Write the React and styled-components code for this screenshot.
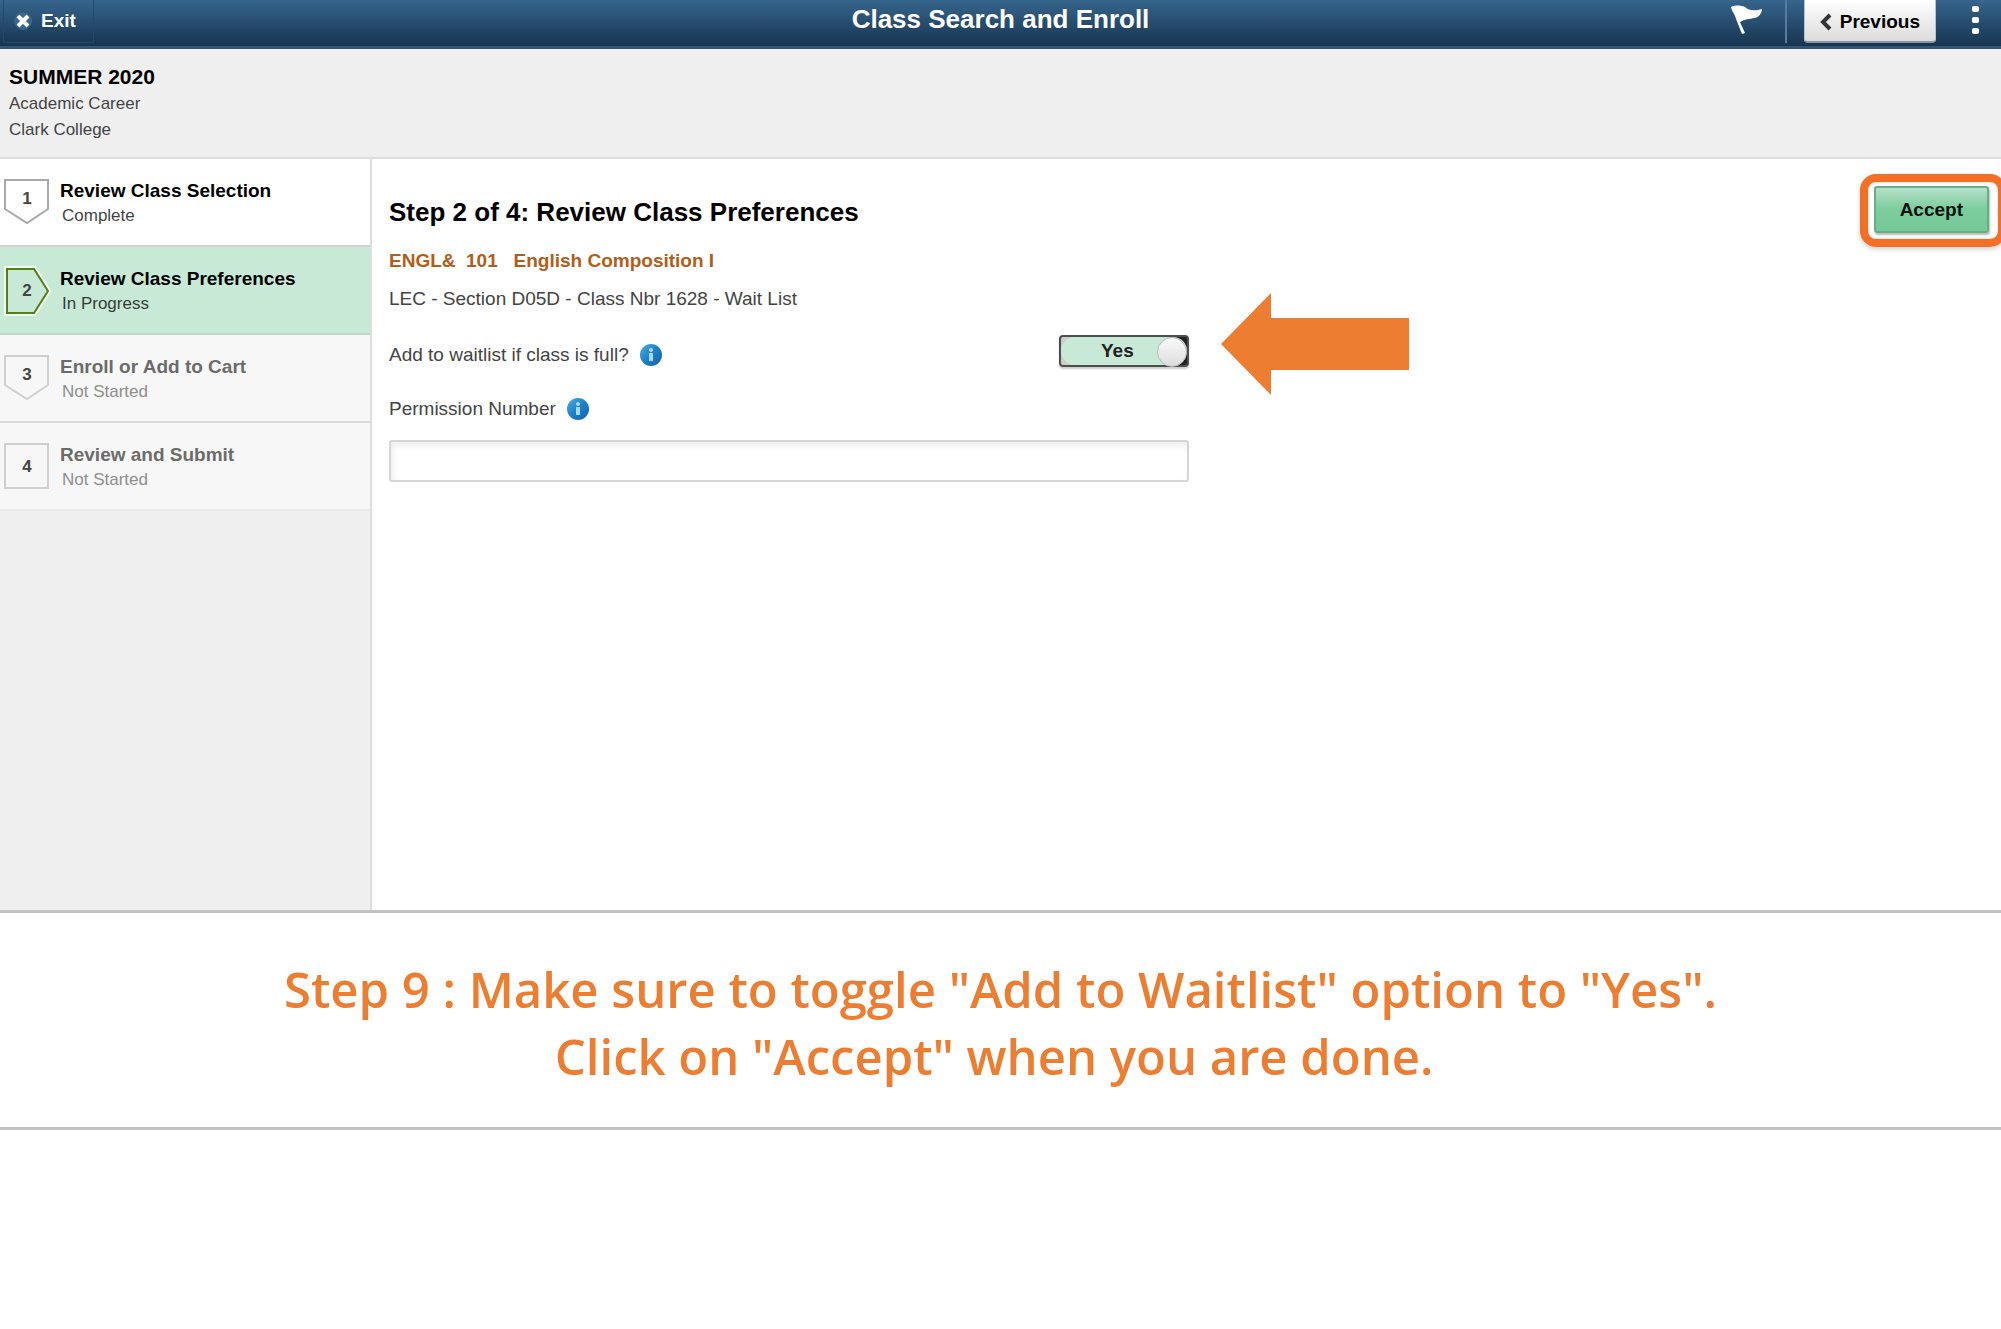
import React, { useState } from "react";
import styled, { createGlobalStyle, css } from "styled-components";

const steps = [
  { id: 1, title: "Review Class Selection", status: "Complete", state: "done" },
  {
    id: 2,
    title: "Review Class Preferences",
    status: "In Progress",
    state: "active",
  },
  { id: 3, title: "Enroll or Add to Cart", status: "Not Started", state: "todo" },
  { id: 4, title: "Review and Submit", status: "Not Started", state: "todo" },
];

const BadgeShape = ({ id, state }) => {
  if (state === "active") {
    return (
      <svg width="48" height="48" viewBox="0 0 48 48" aria-hidden="true">
        <path d="M3 2H30L44 24L30 46H3Z" fill="none" stroke="#f4faf0" strokeWidth="6" />
        <path d="M3 2H30L44 24L30 46H3Z" fill="#c8e9d6" stroke="#4f8118" strokeWidth="2" />
      </svg>
    );
  }

  const stroke = state === "done" ? "#a9a9a9" : "#cfcfcf";

  return (
    <svg width="46" height="46" viewBox="0 0 46 46" aria-hidden="true">
      <path
        d={id === steps.length ? "M1 1H44V45H1Z" : "M1 1H44V30L23 44L1 30Z"}
        fill="none"
        stroke={stroke}
        strokeWidth="2"
      />
    </svg>
  );
};

const InfoIcon = () => (
  <svg width="22" height="22" viewBox="0 0 22 22" aria-hidden="true">
    <defs>
      <linearGradient id="info" x1="0" y1="0" x2="1" y2="1">
        <stop offset="0" stopColor="#4db0dd" />
        <stop offset="0.5" stopColor="#1c80c8" />
        <stop offset="1" stopColor="#1a5fae" />
      </linearGradient>
    </defs>
    <circle cx="11" cy="11" r="11" fill="url(#info)" />
    <circle cx="11" cy="6" r="2" fill="#a9d8f2" />
    <rect x="9" y="9" width="4" height="8" fill="#a9d8f2" />
  </svg>
);

const App = () => {
  const [waitlist, setWaitlist] = useState(true);
  const [permission, setPermission] = useState("");

  return (
    <Page>
      <GlobalStyle />
      <TopBar>
        <ExitButton type="button">
          <svg width="18" height="18" viewBox="0 0 18 18" aria-hidden="true">
            <circle cx="9" cy="9" r="9" fill="#36678f" />
            <path d="M4 4L14 14M14 4L4 14" stroke="#fff" strokeWidth="4" />
          </svg>
          Exit
        </ExitButton>
        <BarTitle>Class Search and Enroll</BarTitle>
        <BarActions>
          <IconButton type="button" aria-label="Notifications">
            <svg width="32" height="30" viewBox="0 0 32 30" aria-hidden="true">
              <path
                d="M0 2C3 0 10 0 14 2C18 6 24 6 31 4C31 8 28 12 24 13C18 14 14 14 9 17L14 28L11 29L5 14C4 9 1 7 0 2Z"
                fill="#fff"
              />
            </svg>
          </IconButton>
          <Divider />
          <PreviousButton type="button">
            <svg width="12" height="18" viewBox="0 0 12 18" aria-hidden="true">
              <path d="M10 2L3 9L10 16" fill="none" stroke="#333" strokeWidth="4" />
            </svg>
            Previous
          </PreviousButton>
          <IconButton type="button" aria-label="Actions">
            <svg width="8" height="30" viewBox="0 0 8 30" aria-hidden="true">
              <rect x="1" y="1" width="7" height="6" rx="2" fill="#fff" />
              <rect x="1" y="12" width="7" height="6" rx="2" fill="#fff" />
              <rect x="1" y="23" width="7" height="6" rx="2" fill="#fff" />
            </svg>
          </IconButton>
        </BarActions>
      </TopBar>

      <TermHeader>
        <h2>SUMMER 2020</h2>
        <p>Academic Career</p>
        <p>Clark College</p>
      </TermHeader>

      <Body>
        <Sidebar>
          {steps.map((step) => (
            <Step key={step.id} $state={step.state}>
              <Badge $down={step.state !== "active" && step.id !== steps.length}>
                <BadgeShape id={step.id} state={step.state} />
                <span>{step.id}</span>
              </Badge>
              <div>
                <StepTitle>{step.title}</StepTitle>
                <StepStatus>{step.status}</StepStatus>
              </div>
            </Step>
          ))}
        </Sidebar>

        <Main>
          <Form>
            <h1>Step 2 of 4: Review Class Preferences</h1>
            <Course>{"ENGL&  101   English Composition I"}</Course>
            <Section>LEC - Section D05D - Class Nbr 1628 - Wait List</Section>

            <ToggleRow>
              <FieldLabel htmlFor="waitlist">
                Add to waitlist if class is full?
                <InfoIcon />
              </FieldLabel>
              <Toggle $on={waitlist}>
                <input
                  id="waitlist"
                  type="checkbox"
                  checked={waitlist}
                  onChange={(e) => setWaitlist(e.target.checked)}
                />
                <span>{waitlist ? "Yes" : "No"}</span>
              </Toggle>
              <Arrow width="188" height="102" viewBox="0 0 188 102" aria-hidden="true">
                <path d="M0 51L50 0V25H188V77H50V102Z" fill="#ed7d31" />
              </Arrow>
            </ToggleRow>

            <FieldLabel htmlFor="permission">
              Permission Number
              <InfoIcon />
            </FieldLabel>
            <TextInput
              id="permission"
              type="text"
              value={permission}
              onChange={(e) => setPermission(e.target.value)}
            />
          </Form>

          <AcceptWrap>
            <AcceptButton type="button">Accept</AcceptButton>
          </AcceptWrap>
        </Main>
      </Body>

      <Caption>
        Step 9 : Make sure to toggle "Add to Waitlist" option to "Yes".
        <br />
        Click on "Accept" when you are done.&nbsp;
      </Caption>
    </Page>
  );
};

const GlobalStyle = createGlobalStyle`
  * {
    box-sizing: border-box;
    margin: 0;
  }

  body {
    background: #fff;
    color: #000;
    font-family: "Liberation Sans", Arial, sans-serif;
    font-size: 19px;
    line-height: 24px;
  }

  button, input {
    font: inherit;
  }
`;

const Page = styled.div`
  overflow-x: hidden;
`;

const TopBar = styled.header`
  display: grid;
  grid-template-columns: 1fr auto 1fr;
  align-items: start;
  height: 49px;
  background: linear-gradient(#36658c, #173450);
  border-bottom: 3px solid #335575;
`;

const ExitButton = styled.button`
  justify-self: start;
  display: flex;
  align-items: center;
  gap: 9px;
  height: 43px;
  margin-left: 3px;
  padding: 0 17px 0 10px;
  color: #fff;
  font-weight: bold;
  background: transparent;
  border: 1px solid #234a6a;
  border-top: none;
`;

const BarTitle = styled.div`
  padding-top: 4px;
  color: #fff;
  font-size: 26px;
  font-weight: bold;
  line-height: 30px;
`;

const BarActions = styled.div`
  display: flex;
  justify-content: flex-end;
`;

const IconButton = styled.button`
  display: flex;
  justify-content: center;
  height: 43px;
  padding: 5px 22px;
  background: transparent;
  border: none;
`;

const Divider = styled.span`
  width: 2px;
  height: 43px;
  margin-right: 17px;
  background: #587d9c;
`;

const PreviousButton = styled.button`
  display: flex;
  align-items: center;
  gap: 8px;
  height: 43px;
  margin-right: 13px;
  padding: 3px 15px 0;
  color: #000;
  font-weight: bold;
  background: linear-gradient(#fff, #dcdcdc);
  border: 1px solid #b9c3cc;
  border-top: none;
  border-bottom: 2px solid #8797a5;
  border-radius: 0 0 4px 4px;
`;

const TermHeader = styled.section`
  padding: 15px 9px 14px;
  background: #efefef;
  border-bottom: 2px solid #dedede;
  line-height: 26px;

  h2 {
    margin-bottom: 1px;
    font-size: 21px;
  }

  p {
    color: #444;
    font-size: 17px;
  }
`;

const Body = styled.div`
  display: flex;
  min-height: 751px;
`;

const Sidebar = styled.nav`
  flex: 0 0 372px;
  background: #efefef;
  border-right: 2px solid #dedede;
`;

const Step = styled.div`
  display: flex;
  align-items: flex-start;
  height: 88px;
  padding: 20px 0 0 4px;
  color: #6b6b6b;
  background: #f7f7f7;
  border-bottom: 2px solid #dadada;

  ${({ $state }) =>
    $state !== "todo" &&
    css`
      color: #000;
      background: ${$state === "active" ? "#c8e9d6" : "#fff"};
      border-color: ${$state === "active" ? "#bfd6c9" : "#cfd4d1"};
    `}

  &:last-child {
    border-color: #ebebeb;
  }
`;

const Badge = styled.div`
  display: grid;
  flex: 0 0 56px;
  font-size: 17px;
  font-weight: bold;

  svg,
  span {
    grid-area: 1 / 1;
  }

  svg {
    overflow: visible;
  }

  span {
    width: 46px;
    padding-top: ${({ $down }) => ($down ? "8px" : "12px")};
    color: #444;
    text-align: center;
  }
`;

const StepTitle = styled.div`
  font-weight: bold;
`;

const StepStatus = styled.div`
  margin-top: 1px;
  padding-left: 2px;
  font-size: 17px;
  opacity: 0.75;
`;

const Main = styled.main`
  flex: 1;
  display: flex;
  justify-content: space-between;
  align-items: flex-start;
  padding: 0 12px 0 17px;
  background: #fff;
`;

const Form = styled.div`
  flex: 0 1 800px;
  padding-top: 38px;

  h1 {
    font-size: 26px;
    line-height: 30px;
  }
`;

const Course = styled.p`
  margin-top: 22px;
  color: #b35d1b;
  font-weight: bold;
  white-space: pre-wrap;
`;

const Section = styled.p`
  margin-top: 14px;
  color: #444;
`;

const ToggleRow = styled.div`
  position: relative;
  display: flex;
  justify-content: space-between;
  align-items: flex-end;
  margin: 24px 0 30px;
`;

const FieldLabel = styled.label`
  display: flex;
  align-items: center;
  gap: 11px;
  color: #444;
`;

const Toggle = styled.div`
  position: relative;
  width: 130px;
  height: 32px;
  background: linear-gradient(to right, #ccc 50%, #222 90%);
  border: 2px solid #4a4f4c;
  border-radius: 4px;
  box-shadow: 0 2px 2px #ccc;

  input {
    appearance: none;
    display: block;
    width: 100%;
    height: 100%;
    background: ${({ $on }) => ($on ? "#c8e9d6" : "#eee")};
    border-radius: 14px;
  }

  span {
    position: absolute;
    top: 2px;
    left: 40px;
    color: #222;
    font-weight: bold;
    pointer-events: none;
  }

  &::after {
    content: "";
    position: absolute;
    top: 0;
    ${({ $on }) => ($on ? "right: 0;" : "left: 0;")}
    width: 28px;
    height: 28px;
    background: linear-gradient(#fafafa, #dcdcdc);
    border: 1px solid #b5bab7;
    border-radius: 50%;
    pointer-events: none;
  }
`;

/* callout arrow, sits beside the toggle */
const Arrow = styled.svg`
  position: absolute;
  top: -42px;
  left: calc(100% + 32px);
`;

const TextInput = styled.input`
  display: block;
  width: 100%;
  height: 42px;
  margin-top: 19px;
  padding: 0 10px;
  border: 2px solid #d6d6d6;
  border-radius: 3px;
  box-shadow: inset 2px 4px 6px #eee;
`;

const AcceptWrap = styled.div`
  position: relative;
  margin-top: 27px;

  &::after {
    content: "";
    position: absolute;
    top: -12px;
    right: -17px;
    bottom: -14px;
    left: -14px;
    border: 8px solid #f36f26;
    border-radius: 16px;
    box-shadow: 0 2px 5px #ccc, inset 0 0 3px #ccc;
    pointer-events: none;
  }
`;

const AcceptButton = styled.button`
  display: block;
  height: 47px;
  padding: 0 24px;
  color: #111;
  font-weight: bold;
  background: linear-gradient(#b5dfc8, #7bcd9d 50%, #74c997);
  border: 2px solid #62b084;
  border-radius: 3px;
  box-shadow: 1px 2px 2px #bbb;
`;

const Caption = styled.p`
  padding: 43px 20px 37px;
  color: #ed7d31;
  border: solid #c3c3c3;
  border-width: 3px 0;
  font-family: "Open Sans", "Noto Sans", sans-serif;
  font-size: 49px;
  font-weight: 600;
  line-height: 67px;
  text-align: center;
`;

export default App;
